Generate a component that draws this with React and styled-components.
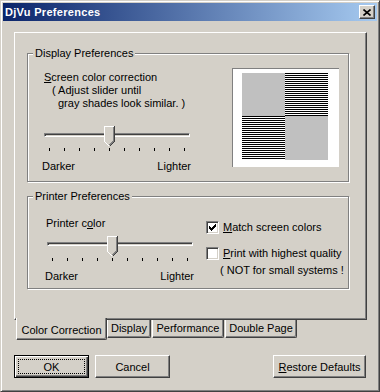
import React from 'react';
import styled, { createGlobalStyle, css } from 'styled-components';

const FACE = '#D4D0C8';
const SHADOW = '#808080';
const DARK = '#404040';

const GlobalStyle = createGlobalStyle`
  html, body {
    margin: 0;
    padding: 0;
    background: ${FACE};
  }
  body {
    font-family: "Liberation Sans", Arial, sans-serif;
    font-size: 11px;
    color: #000;
  }
  * {
    box-sizing: border-box;
  }
`;

const Window = styled.div`
  width: 380px;
  height: 392px;
  display: flex;
  flex-direction: column;
  padding: 2px;
  background: ${FACE};
  border: 1px solid;
  border-color: ${FACE} ${DARK} ${DARK} ${FACE};
  box-shadow: inset 1px 1px #fff, inset -1px -1px ${SHADOW};
`;

const TitleBar = styled.div`
  height: 18px;
  display: flex;
  align-items: center;
  justify-content: space-between;
  padding: 0 2px 0 2px;
  background: linear-gradient(to right, #0a246a, #a6caf0);
`;

const Title = styled.span`
  color: #fff;
  font-weight: bold;
  font-size: 11px;
  letter-spacing: 0.3px;
  line-height: 13px;
`;

const CloseButton = styled.div`
  width: 16px;
  height: 14px;
  display: flex;
  align-items: center;
  justify-content: center;
  background: ${FACE};
  border: 1px solid;
  border-color: #fff ${DARK} ${DARK} #fff;
  box-shadow: inset -1px -1px ${SHADOW};
`;

const Body = styled.div`
  flex: 1;
  display: flex;
  flex-direction: column;
  padding: 11px 10px 0 11px;
`;

const Panel = styled.div`
  height: 288px;
  display: flex;
  flex-direction: column;
  padding: 20px 0 0 12px;
  border: 1px solid;
  border-color: #fff ${DARK} ${DARK} #fff;
  box-shadow: inset -1px -1px ${SHADOW};
`;

const Group = styled.div`
  position: relative;
  display: flex;
  width: 322px;
  height: ${(p) => p.$h}px;
  margin-top: ${(p) => p.$mt || 0}px;
  border: 1px solid ${SHADOW};
  box-shadow: inset 1px 1px #fff, 1px 1px #fff;
`;

const Legend = styled.span`
  position: absolute;
  top: -7px;
  left: 5px;
  padding: 0 2px;
  line-height: 13px;
  background: ${FACE};
  white-space: nowrap;
`;

const Column = styled.div`
  display: flex;
  flex-direction: column;
  flex-shrink: 0;
  width: ${(p) => (p.$w ? `${p.$w}px` : 'auto')};
  padding-left: ${(p) => p.$pl || 0}px;
  padding-top: ${(p) => p.$pt || 0}px;
  margin-left: ${(p) => p.$ml || 0}px;
`;

const TextLine = styled.div`
  line-height: 13px;
  white-space: nowrap;
  padding-left: ${(p) => p.$indent || 0}px;
`;

const U = styled.span`
  text-decoration: underline;
`;

const SliderBox = styled.div`
  width: 146px;
  margin-left: ${(p) => p.$ml || 0}px;
  margin-top: ${(p) => p.$mt || 0}px;
`;

const TrackArea = styled.div`
  position: relative;
  height: 20px;
  padding-top: ${(p) => p.$top}px;
`;

const Track = styled.div`
  height: 4px;
  border: 1px solid;
  border-color: ${SHADOW} #fff #fff ${SHADOW};
  box-shadow: inset 1px 1px ${DARK};
`;

const Thumb = styled.svg`
  position: absolute;
  top: 0;
  left: ${(p) => p.$left}px;
`;

const Ticks = styled.div`
  display: flex;
  justify-content: space-between;
  height: 3px;
  margin-top: 2px;
  padding: 0 5px;
`;

const Tick = styled.span`
  width: 1px;
  height: 3px;
  background: #000;
`;

const SliderLabels = styled.div`
  display: flex;
  justify-content: space-between;
  margin: 9px -1px 0 -2px;
  line-height: 13px;
`;

const Preview = styled.div`
  display: grid;
  grid-template-columns: 43px 43px;
  grid-template-rows: 43px 44px;
  align-content: start;
  width: 107px;
  height: 99px;
  margin: 14px 0 0 42px;
  padding: 4px 0 0 9px;
  background: #fff;
  border-top: 1px solid ${SHADOW};
  border-left: 1px solid ${SHADOW};
`;

const Swatch = styled.div`
  background: ${(p) =>
    p.$striped
      ? 'repeating-linear-gradient(to bottom, #000 0 1px, #fff 1px 2px)'
      : '#C0C0C0'};
`;

const CheckRow = styled.div`
  display: flex;
  align-items: center;
  gap: 4px;
  height: 13px;
  margin-top: ${(p) => p.$mt || 0}px;
  line-height: 13px;
  white-space: nowrap;
`;

const CheckBox = styled.div`
  width: 13px;
  height: 13px;
  flex-shrink: 0;
  display: flex;
  align-items: center;
  justify-content: center;
  background: #fff;
  border: 1px solid;
  border-color: ${SHADOW} #fff #fff ${SHADOW};
  box-shadow: inset 1px 1px ${DARK}, inset -1px -1px ${FACE};
`;

const Note = styled.div`
  margin-top: 4px;
  padding-left: 14px;
  line-height: 13px;
  white-space: nowrap;
`;

const TabRow = styled.div`
  display: flex;
  align-items: flex-start;
  margin-top: -2px;
  padding-left: 2px;
`;

const Tab = styled.div`
  position: relative;
  width: ${(p) => p.$w}px;
  height: ${(p) => (p.$active ? 22 : 18)}px;
  margin-top: ${(p) => (p.$active ? 0 : 2)}px;
  margin-left: ${(p) => p.$ml || 0}px;
  padding-top: ${(p) => (p.$active ? 6 : 2)}px;
  display: flex;
  justify-content: center;
  line-height: 13px;
  white-space: nowrap;
  background: ${FACE};
  border-left: 1px solid #fff;
  border-right: 1px solid ${DARK};
  border-bottom: 1px solid ${DARK};
  border-bottom-right-radius: 2px;
  box-shadow: inset -1px -1px ${SHADOW};
`;

const ButtonRow = styled.div`
  display: flex;
  gap: 6px;
  margin-top: 15px;
  padding-right: 1px;
`;

const Button = styled.button`
  position: relative;
  width: ${(p) => p.$w}px;
  height: 23px;
  margin-left: ${(p) => (p.$push ? 'auto' : '0')};
  padding: 0;
  font-family: inherit;
  font-size: 11px;
  color: #000;
  background: ${FACE};
  border: 1px solid;
  border-color: #fff ${DARK} ${DARK} #fff;
  box-shadow: inset -1px -1px ${SHADOW};
  ${(p) =>
    p.$default &&
    css`
      border-color: #000;
      box-shadow: inset 1px 1px #fff, inset -1px -1px ${DARK},
        inset -2px -2px ${SHADOW};
      &::after {
        content: '';
        position: absolute;
        inset: 3px;
        border: 1px dotted #000;
      }
    `}
`;

const CHECK = [
  '......X',
  '.....XX',
  'X...XXX',
  'XX.XXX.',
  'XXXXX..',
  '.XXX...',
  '..X....',
];

function CheckMark() {
  const cells = [];
  CHECK.forEach((row, y) =>
    row.split('').forEach((c, x) => {
      if (c === 'X') cells.push(<rect key={`${x}-${y}`} x={x} y={y} width="1" height="1" />);
    })
  );
  return (
    <svg width="7" height="7" viewBox="0 0 7 7" shapeRendering="crispEdges" fill="#000">
      {cells}
    </svg>
  );
}

function Slider({ value, ml, mt, trackTop }) {
  return (
    <SliderBox $ml={ml} $mt={mt}>
      <TrackArea $top={trackTop}>
        <Track />
        <Thumb $left={value * 15} width="11" height="21" viewBox="0 0 11 21" shapeRendering="crispEdges">
          <polygon points="0,0 11,0 11,15 5.5,20.5 0,15" fill={FACE} />
          <path d="M0.5 15 V0.5 H10" stroke="#fff" fill="none" />
          <path d="M0.5 15.5 L5.5 20.5" stroke="#fff" fill="none" />
          <path d="M10.5 0 V15.5 L5.5 20.5" stroke={DARK} fill="none" />
          <path d="M9.5 1 V15 L5.5 19" stroke={SHADOW} fill="none" />
        </Thumb>
      </TrackArea>
      <Ticks>
        {Array.from({ length: 10 }).map((_, i) => (
          <Tick key={i} />
        ))}
      </Ticks>
      <SliderLabels>
        <span>Darker</span>
        <span>Lighter</span>
      </SliderLabels>
    </SliderBox>
  );
}

export default function App() {
  return (
    <>
      <GlobalStyle />
      <Window>
        <TitleBar>
          <Title>DjVu Preferences</Title>
          <CloseButton>
            <svg width="8" height="7" viewBox="0 0 8 7">
              <path d="M0.5 0.5 L7.5 6.5 M7.5 0.5 L0.5 6.5" stroke="#000" strokeWidth="1.6" />
            </svg>
          </CloseButton>
        </TitleBar>
        <Body>
          <Panel>
            <Group $h={129}>
              <Legend>Display Preferences</Legend>
              <Column $w={162} $pl={16} $pt={17}>
                <TextLine>
                  <U>S</U>creen color correction
                </TextLine>
                <TextLine $indent={8}>( Adjust slider until</TextLine>
                <TextLine $indent={14}>gray shades look similar. )</TextLine>
                <Slider value={4} mt={16} trackTop={7} />
              </Column>
              <Preview>
                <Swatch />
                <Swatch $striped />
                <Swatch $striped />
                <Swatch />
              </Preview>
            </Group>
            <Group $h={93} $mt={14}>
              <Legend>Printer Preferences</Legend>
              <Column $w={165} $pl={18} $pt={20}>
                <TextLine>
                  Printer c<U>o</U>lor
                </TextLine>
                <Slider value={4} ml={1} mt={6} trackTop={6} />
              </Column>
              <Column $ml={13} $pt={24}>
                <CheckRow>
                  <CheckBox>
                    <CheckMark />
                  </CheckBox>
                  <span>
                    <U>M</U>atch screen colors
                  </span>
                </CheckRow>
                <CheckRow $mt={13}>
                  <CheckBox />
                  <span>
                    <U>P</U>rint with highest quality
                  </span>
                </CheckRow>
                <Note>( NOT for small systems !</Note>
              </Column>
            </Group>
          </Panel>
          <TabRow>
            <Tab $active $w={91}>Color Correction</Tab>
            <Tab $w={44}>Display</Tab>
            <Tab $w={72} $ml={1}>Performance</Tab>
            <Tab $w={72} $ml={1}>Double Page</Tab>
          </TabRow>
          <ButtonRow>
            <Button $w={75} $default>OK</Button>
            <Button $w={75}>Cancel</Button>
            <Button $w={93} $push>
              <U>R</U>estore Defaults
            </Button>
          </ButtonRow>
        </Body>
      </Window>
    </>
  );
}
